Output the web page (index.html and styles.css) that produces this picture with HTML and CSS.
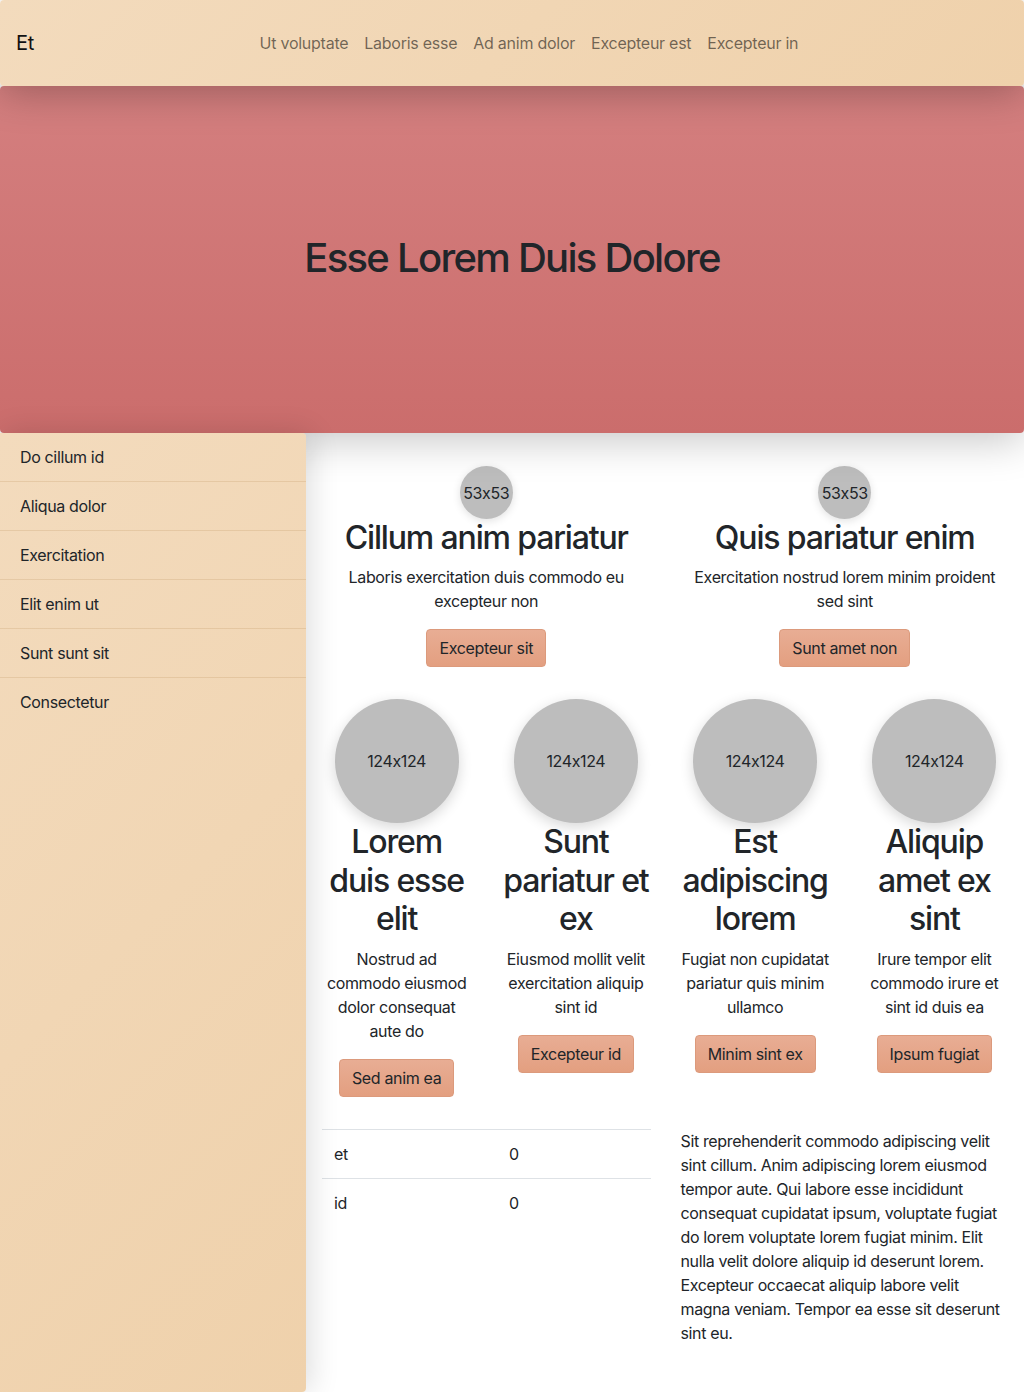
FILE: index.html
```html
<!DOCTYPE html>
<html lang="en">
<head>
<meta charset="utf-8">
<title>Et</title>
<link rel="stylesheet" href="styles.css">
</head>
<body>
<header class="navbar">
  <a class="brand" href="#">Et</a>
  <nav class="nav">
    <a href="#">Ut voluptate</a>
    <a href="#">Laboris esse</a>
    <a href="#">Ad anim dolor</a>
    <a href="#">Excepteur est</a>
    <a href="#">Excepteur in</a>
  </nav>
</header>
<section class="hero">
  <h1>Esse Lorem Duis Dolore</h1>
</section>
<div class="layout">
  <aside class="sidebar">
    <a class="side-item" href="#">Do cillum id</a>
    <a class="side-item" href="#">Aliqua dolor</a>
    <a class="side-item" href="#">Exercitation</a>
    <a class="side-item" href="#">Elit enim ut</a>
    <a class="side-item" href="#">Sunt sunt sit</a>
    <a class="side-item" href="#">Consectetur</a>
  </aside>
  <main class="main">
    <div class="row">
      <div class="col col-2">
        <div class="card">
          <div class="avatar small">53x53</div>
          <h2>Cillum anim pariatur</h2>
          <p>Laboris exercitation duis commodo eu excepteur non</p>
          <a class="btn" href="#">Excepteur sit</a>
        </div>
      </div>
      <div class="col col-2">
        <div class="card">
          <div class="avatar small">53x53</div>
          <h2>Quis pariatur enim</h2>
          <p>Exercitation nostrud lorem minim proident sed sint</p>
          <a class="btn" href="#">Sunt amet non</a>
        </div>
      </div>
    </div>
    <div class="row">
      <div class="col col-4">
        <div class="card">
          <div class="avatar big">124x124</div>
          <h2>Lorem duis esse elit</h2>
          <p>Nostrud ad commodo eiusmod dolor consequat aute do</p>
          <a class="btn" href="#">Sed anim ea</a>
        </div>
      </div>
      <div class="col col-4">
        <div class="card">
          <div class="avatar big">124x124</div>
          <h2>Sunt pariatur et ex</h2>
          <p>Eiusmod mollit velit exercitation aliquip sint id</p>
          <a class="btn" href="#">Excepteur id</a>
        </div>
      </div>
      <div class="col col-4">
        <div class="card">
          <div class="avatar big">124x124</div>
          <h2>Est adipiscing lorem</h2>
          <p>Fugiat non cupidatat pariatur quis minim ullamco</p>
          <a class="btn" href="#">Minim sint ex</a>
        </div>
      </div>
      <div class="col col-4">
        <div class="card">
          <div class="avatar big">124x124</div>
          <h2>Aliquip amet ex sint</h2>
          <p>Irure tempor elit commodo irure et sint id duis ea</p>
          <a class="btn" href="#">Ipsum fugiat</a>
        </div>
      </div>
    </div>
    <div class="row">
      <div class="col col-2">
        <table class="table">
          <tbody>
            <tr><td class="c1">et</td><td>0</td></tr>
            <tr><td class="c1">id</td><td>0</td></tr>
          </tbody>
        </table>
      </div>
      <div class="col col-2">
        <p class="para">Sit reprehenderit commodo adipiscing velit sint cillum. Anim adipiscing lorem eiusmod tempor aute. Qui labore esse incididunt consequat cupidatat ipsum, voluptate fugiat do lorem voluptate lorem fugiat minim. Elit nulla velit dolore aliquip id deserunt lorem. Excepteur occaecat aliquip labore velit magna veniam. Tempor ea esse sit deserunt sint eu.</p>
      </div>
    </div>
  </main>
</div>
</body>
</html>
```

FILE: styles.css
```css
* { box-sizing: border-box; }
html, body {
  margin: 0;
  padding: 0;
}
body {
  font-family: Inter, "Noto Sans", "Liberation Sans", sans-serif;
  font-feature-settings: "calt" 0;
  font-size: 16px;
  line-height: 1.5;
  letter-spacing: -0.022em;
  color: #212529;
  background: #fff;
  min-height: 1392px;
  display: flex;
  flex-direction: column;
}
a { text-decoration: none; color: inherit; }

.navbar {
  position: relative;
  z-index: 3;
  height: 86px;
  display: flex;
  align-items: center;
  padding: 0 16px;
  background: linear-gradient(135deg, #f3dbbd, #efd1ab);
  border-radius: 4px;
  box-shadow: 0 6px 40px rgba(0, 0, 0, 0.28);
}
.brand {
  font-size: 20px;
  color: #111;
  margin-right: 16px;
}
.nav {
  flex: 1;
  display: flex;
  justify-content: center;
}
.nav a {
  padding: 0 8px;
  color: rgba(0, 0, 0, 0.55);
  letter-spacing: -0.016em;
}

.hero {
  position: relative;
  z-index: 2;
  height: 347px;
  display: flex;
  align-items: center;
  justify-content: center;
  padding-bottom: 4px;
  background: linear-gradient(180deg, #d47f7f, #cb6d6c);
  border-radius: 4px;
  box-shadow: 0 8px 40px rgba(0, 0, 0, 0.22);
}
.hero h1 {
  margin: 0;
  font-size: 40px;
  font-weight: 500;
  line-height: 1.2;
  letter-spacing: -0.043em;
  color: #212529;
}

.layout {
  flex: 1;
  display: flex;
}
.sidebar {
  position: relative;
  z-index: 2;
  width: 306px;
  flex-shrink: 0;
  display: flex;
  flex-direction: column;
  background: linear-gradient(135deg, #f3dbbd, #efd1ab);
  border-radius: 0 4px 4px 0;
  box-shadow: 4px 0 30px rgba(0, 0, 0, 0.14);
}
.side-item {
  padding: 12px 20px;
  color: #212529;
  border-bottom: 1px solid rgba(160, 110, 50, 0.16);
}
.side-item:last-child { border-bottom: none; }

.main {
  flex: 1;
  position: relative;
  z-index: 1;
  padding-top: 33px;
  margin-left: 1px;
}
.row {
  display: flex;
}
.col {
  padding: 0 15px;
}
.col-2 { width: 50%; }
.col-4 { width: 25%; }

.card {
  text-align: center;
  margin-bottom: 32px;
}
.avatar {
  margin: 0 auto;
  border-radius: 50%;
  background: #bdbdbd;
  display: flex;
  align-items: center;
  justify-content: center;
  color: #212529;
}
.avatar.small {
  width: 53px;
  height: 53px;
  box-shadow: 0 2px 8px rgba(0, 0, 0, 0.12);
}
.avatar.big {
  width: 124px;
  height: 124px;
  box-shadow: 0 4px 14px rgba(0, 0, 0, 0.16);
}
.card h2 {
  margin: 0 0 8px;
  font-size: 32px;
  font-weight: 500;
  line-height: 1.2;
  letter-spacing: -0.036em;
}
.card p {
  margin: 0 0 16px;
}
.btn {
  display: inline-block;
  padding: 6px 12px;
  border: 1px solid #dc9a7c;
  border-radius: 4px;
  background: linear-gradient(180deg, #e8ad94, #e39f80);
  color: #212529;
  line-height: 24px;
}

.table {
  width: 100%;
  border-collapse: collapse;
  background: #fff;
}
.table td {
  padding: 12px;
  border-top: 1px solid #dee2e6;
  text-align: left;
}
.table td.c1 { width: 175px; }
.para {
  margin: 0 0 16px;
}
```
